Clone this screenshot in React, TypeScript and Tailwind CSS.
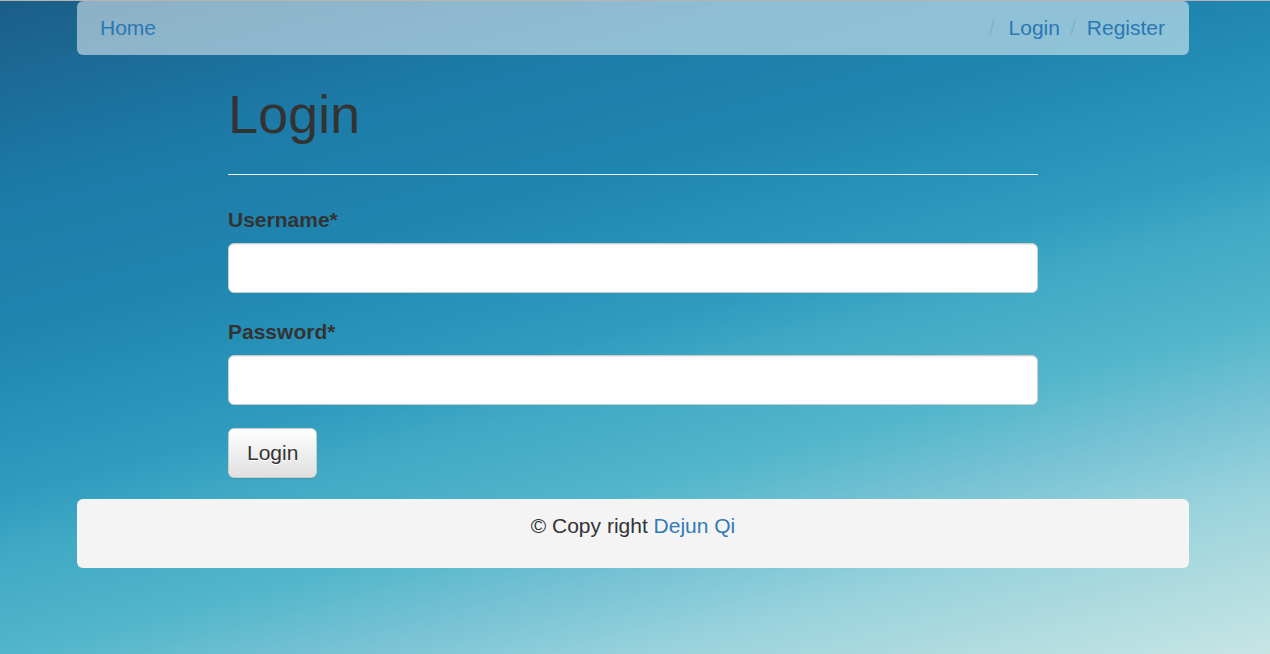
import React from 'react';

const Separator: React.FC<{ className?: string }> = ({ className = 'pl-[10px] pr-[11px]' }) => (
  <span className={`${className} text-[#7fb2cd]`}>/</span>
);

const FormField: React.FC<{ label: string; type: string; last?: boolean }> = ({ label, type, last }) => (
  <div className={last ? 'mb-[23px]' : 'mb-[24px]'}>
    <label className="mb-[8px] block text-[21px] font-bold leading-[30px] text-[#333333]">
      {label}
    </label>
    <input
      type={type}
      className="block h-[50px] w-full rounded-[6px] border border-[#cccccc] bg-white px-[18px] text-[21px] text-[#555555] shadow-[inset_0_1px_1px_rgba(0,0,0,0.075)] outline-none"
    />
  </div>
);

export default function App() {
  return (
    <div className="min-h-screen h-[654px] overflow-hidden bg-[linear-gradient(165deg,#1a5e88_0%,#1d7ba8_20%,#1f86b0_34%,#2f9cbf_50%,#40a9c4_56%,#52b5cb_66%,#78c3d4_75%,#98d2dc_83%,#c8e5e4_100%)] font-['Liberation_Sans',Arial,sans-serif] text-[21px] text-[#333333]">
      <div className="h-px bg-[#b8b4b4]" />
      <div className="ml-[77px] w-[1112px]">
        <nav className="flex h-[54px] items-center justify-between rounded-[6px] bg-white/50 pl-[23px] pr-[24px] leading-[30px]">
          <a href="#" className="text-[#2a78b3]">Home</a>
          <div className="flex items-center">
            <Separator className="pr-[14px]" />
            <a href="#" className="text-[#2a78b3]">Login</a>
            <Separator />
            <a href="#" className="text-[#2a78b3]">Register</a>
          </div>
        </nav>

        <div className="ml-[151px] w-[810px]">
          <div className="mt-[30px] border-b border-[#eeeeee] pb-[15px]">
            <h1 className="mb-[15px] text-[54px] leading-[59px] font-normal text-[#333333]">Login</h1>
          </div>

          <form className="mt-[30px]" onSubmit={(e) => e.preventDefault()}>
            <FormField label="Username*" type="text" />
            <FormField label="Password*" type="password" last />
            <button
              type="submit"
              className="h-[50px] rounded-[6px] border border-[#cccccc] bg-[linear-gradient(to_bottom,#ffffff_0%,#e0e0e0_100%)] px-[18px] text-[21px] leading-[30px] text-[#333333] shadow-[inset_0_1px_0_rgba(255,255,255,0.15),0_1px_1px_rgba(0,0,0,0.075)] [text-shadow:0_1px_0_#fff]"
            >
              Login
            </button>
          </form>
        </div>

        <footer className="mt-[21px] h-[69px] rounded-[6px] bg-[#f4f4f4] pt-[12px] text-center leading-[30px]">
          © Copy right <a href="#" className="text-[#337ab7]">Dejun Qi</a>
        </footer>
      </div>
    </div>
  );
}
